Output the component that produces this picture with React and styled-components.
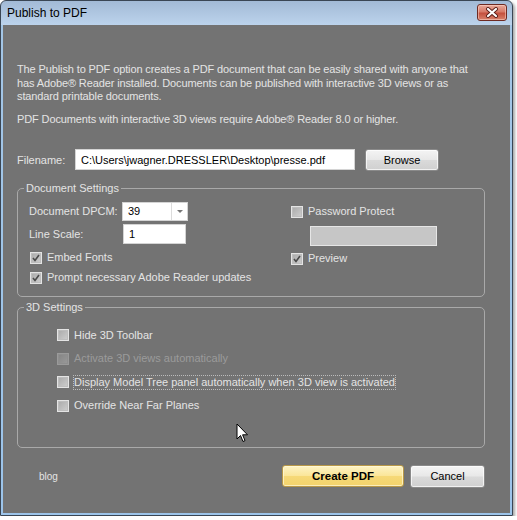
import styled, { createGlobalStyle } from 'styled-components';

const GlobalStyle = createGlobalStyle`
  html, body {
    margin: 0;
    padding: 0;
    background: #ffffff;
  }
  body {
    font-family: "Liberation Sans", Arial, sans-serif;
  }
`;

const Window = styled.div`
  position: relative;
  width: 513px;
  height: 516px;
  box-sizing: border-box;
  border: 1px solid #3a4654;
  border-radius: 6px 6px 0 0;
  background: linear-gradient(#a2bad6, #bcd3ec 24px, #a4c6e6 24px, #9cc4ea);
  padding: 0 2px 2px 2px;
  display: flex;
  flex-direction: column;
  box-shadow: 2px 2px 3px rgba(0, 0, 0, 0.35);
`;

const TitleBar = styled.div`
  height: 24px;
  display: flex;
  align-items: flex-start;
  justify-content: space-between;
`;

const Title = styled.span`
  font-size: 12px;
  line-height: 24px;
  color: #000;
  padding-left: 4px;
`;

const CloseButton = styled.div`
  width: 30px;
  height: 17px;
  margin: 3px 3px 0 0;
  box-sizing: border-box;
  border: 1px solid #6e2a22;
  border-radius: 3px;
  background: linear-gradient(#e9a99a, #d77a68 45%, #c4503e 55%, #d8826c);
  display: flex;
  align-items: center;
  justify-content: center;
  box-shadow: inset 0 0 0 1px rgba(255, 220, 210, 0.5);
`;

const Content = styled.div`
  flex: 1;
  background: #737373;
  padding: 38px 25px 0 14px;
  color: #e4e4e4;
  font-size: 11px;
`;

const Paragraph = styled.p`
  margin: ${(p) => (p.$second ? '9.5px' : '0')} 0 0 0;
  line-height: 13.5px;
  white-space: nowrap;
  letter-spacing: -0.12px;
`;

const FileRow = styled.div`
  display: flex;
  align-items: center;
  height: 22px;
  margin-top: 22px;
`;

const FieldLabel = styled.span`
  width: ${(p) => p.$w}px;
  flex: none;
`;

const TextBox = styled.div`
  box-sizing: border-box;
  width: ${(p) => p.$w}px;
  height: ${(p) => p.$h}px;
  background: ${(p) => (p.$disabled ? '#c6c6c6' : '#ffffff')};
  border: 1px solid ${(p) => (p.$disabled ? '#e6e6e6' : '#d4d4d4')};
  color: #000;
  padding-left: 5px;
  display: flex;
  align-items: center;
  font-size: 11px;
  margin-left: ${(p) => p.$ml || 0}px;
  margin-top: ${(p) => p.$mt || 0}px;
`;

const Button = styled.div`
  box-sizing: border-box;
  width: ${(p) => p.$w}px;
  height: ${(p) => p.$h}px;
  margin-left: ${(p) => p.$ml || 0}px;
  border: 1px solid #8a8a8a;
  border-radius: 3px;
  background: linear-gradient(#f4f4f4, #e8e8e8 48%, #dadada 52%, #d0d0d0);
  box-shadow: inset 0 0 0 1px rgba(255, 255, 255, 0.7);
  color: #000;
  font-size: 11px;
  display: flex;
  align-items: center;
  justify-content: center;
`;

const PrimaryButton = styled(Button)`
  border-color: #b89848;
  background: linear-gradient(#fdf3c4, #fbe69a 48%, #f6d977 52%, #f3d36c);
  box-shadow: inset 0 0 0 1px rgba(255, 250, 220, 0.7);
  font-weight: bold;
  font-size: 11.5px;
`;

const Group = styled.fieldset`
  margin: ${(p) => p.$mt}px 0 0 0;
  padding: 0;
  width: 468px;
  box-sizing: border-box;
  border: 1px solid #a9a9a9;
  border-radius: 5px;
  min-width: 0;
`;

const Legend = styled.legend`
  margin-left: 6px;
  padding: 0 2px;
  font-size: 11px;
  line-height: 13px;
  color: #e4e4e4;
`;

const DocBody = styled.div`
  display: grid;
  grid-template-columns: 262px 1fr;
  padding: 7px 0 8px 11px;
`;

const Column = styled.div`
  display: flex;
  flex-direction: column;
`;

const FormRow = styled.div`
  display: flex;
  align-items: center;
  height: ${(p) => p.$h}px;
  margin-top: ${(p) => p.$mt || 0}px;
`;

const Select = styled(TextBox)`
  padding-right: 0;
  justify-content: space-between;
`;

const SelectArrow = styled.div`
  width: 15px;
  height: 100%;
  border-left: 1px solid #dcdcdc;
  display: flex;
  align-items: center;
  justify-content: center;
  &::after {
    content: '';
    border-left: 3px solid transparent;
    border-right: 3px solid transparent;
    border-top: 3px solid #777;
  }
`;

const CheckRow = styled.div`
  display: flex;
  align-items: center;
  gap: 5px;
  height: ${(p) => p.$h || 20}px;
  margin-left: ${(p) => p.$ml || 0}px;
  margin-top: ${(p) => p.$mt || 0}px;
  color: ${(p) => (p.$disabled ? '#9b9b9b' : '#e4e4e4')};
`;

const Box = styled.span`
  box-sizing: border-box;
  width: 12px;
  height: 12px;
  flex: none;
  border: 1px solid ${(p) => (p.$disabled ? '#9a9a9a' : '#e4e4e4')};
  background: ${(p) =>
    p.$disabled
      ? 'linear-gradient(135deg, #848484, #9a9a9a)'
      : 'linear-gradient(135deg, #a9a9a9, #cfcfcf)'};
  box-shadow: inset 0 0 0 1px ${(p) => (p.$disabled ? '#8e8e8e' : '#bdbdbd')};
  display: flex;
  align-items: center;
  justify-content: center;
`;

const CheckText = styled.span`
  outline: ${(p) => (p.$focus ? '1px dotted #bcbcbc' : 'none')};
  outline-offset: 0;
  line-height: 13px;
`;

const ThreeDBody = styled.div`
  padding: 10px 0 29px 39px;
  display: flex;
  flex-direction: column;
`;

const Footer = styled.div`
  display: flex;
  align-items: center;
  height: 23px;
  margin-top: 17px;
  width: 468px;
`;

const Blog = styled.span`
  margin-left: 22px;
  font-size: 10px;
  color: #e4e4e4;
  flex: 1;
`;

const Cursor = styled.svg`
  position: absolute;
  left: 235px;
  top: 422px;
`;

const Check = ({ checked, disabled, children, focus, ...rest }) => (
  <CheckRow $disabled={disabled} {...rest}>
    <Box $disabled={disabled}>
      {checked && (
        <svg width="8" height="8" viewBox="0 0 8 8">
          <path d="M1 4 L3 6.5 L7 1" fill="none" stroke="#4a4a4a" strokeWidth="1.6" />
        </svg>
      )}
    </Box>
    <CheckText $focus={focus}>{children}</CheckText>
  </CheckRow>
);

const App = () => {
  return (
    <>
      <GlobalStyle />
      <Window>
        <TitleBar>
          <Title>Publish to PDF</Title>
          <CloseButton>
            <svg width="14" height="11" viewBox="0 0 14 11">
              <path d="M3 2 L11 9 M11 2 L3 9" stroke="#5a1e18" strokeWidth="4" strokeLinecap="round" />
              <path d="M3 2 L11 9 M11 2 L3 9" stroke="#ffffff" strokeWidth="2.2" strokeLinecap="round" />
            </svg>
          </CloseButton>
        </TitleBar>
        <Content>
          <Paragraph>
            The Publish to PDF option creates a PDF document that can be easily shared with anyone that
            <br />
            has Adobe® Reader installed. Documents can be published with interactive 3D views or as
            <br />
            standard printable documents.
          </Paragraph>
          <Paragraph $second>PDF Documents with interactive 3D views require Adobe® Reader 8.0 or higher.</Paragraph>

          <FileRow>
            <FieldLabel $w={58}>Filename:</FieldLabel>
            <TextBox $w={280} $h={21}>C:\Users\jwagner.DRESSLER\Desktop\presse.pdf</TextBox>
            <Button $w={74} $h={22} $ml={10}>Browse</Button>
          </FileRow>

          <Group $mt={11}>
            <Legend>Document Settings</Legend>
            <DocBody>
              <Column>
                <FormRow $h={19}>
                  <FieldLabel $w={93}>Document DPCM:</FieldLabel>
                  <Select $w={66} $h={19}>
                    39
                    <SelectArrow />
                  </Select>
                </FormRow>
                <FormRow $h={20} $mt={3}>
                  <FieldLabel $w={94}>Line Scale:</FieldLabel>
                  <TextBox $w={63} $h={20}>1</TextBox>
                </FormRow>
                <Check checked $ml={1} $mt={4}>Embed Fonts</Check>
                <Check checked $ml={1}>Prompt necessary Adobe Reader updates</Check>
              </Column>
              <Column>
                <Check>Password Protect</Check>
                <TextBox $w={127} $h={20} $ml={19} $mt={4} $disabled />
                <Check checked $mt={3}>Preview</Check>
              </Column>
            </DocBody>
          </Group>

          <Group $mt={4}>
            <Legend>3D Settings</Legend>
            <ThreeDBody>
              <Check $h={23.5}>Hide 3D Toolbar</Check>
              <Check $h={23.5} disabled>Activate 3D views automatically</Check>
              <Check $h={23.5} focus>Display Model Tree panel automatically when 3D view is activated</Check>
              <Check $h={23.5}>Override Near Far Planes</Check>
            </ThreeDBody>
          </Group>

          <Footer>
            <Blog>blog</Blog>
            <PrimaryButton $w={122} $h={22}>Create PDF</PrimaryButton>
            <Button $w={75} $h={23} $ml={6}>Cancel</Button>
          </Footer>
        </Content>
        <Cursor width="13" height="21" viewBox="0 0 13 21">
          <path
            d="M1 1 L1 16 L4.5 12.5 L7 18.5 L9 17.6 L6.6 11.8 L11.5 11.8 Z"
            fill="#ffffff"
            stroke="#000000"
            strokeWidth="1"
            strokeLinejoin="round"
          />
        </Cursor>
      </Window>
    </>
  );
};

export default App;
